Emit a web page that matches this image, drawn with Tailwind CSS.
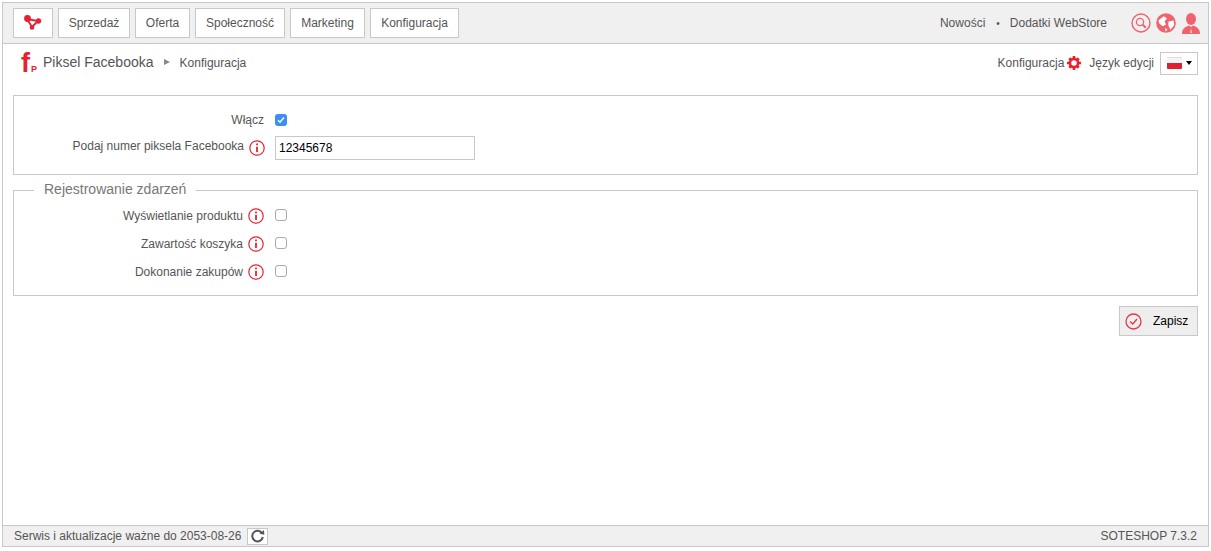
<!DOCTYPE html>
<html lang="pl">
<head>
  <meta charset="UTF-8">
  <title>Piksel Facebooka</title>
  <script src="https://cdn.jsdelivr.net/npm/@tailwindcss/browser@4"></script>
</head>
<body class="bg-white font-['Liberation_Sans',Arial,sans-serif] text-[12px] text-[#555]">
  <div class="ml-[2px] mr-[2px] mt-[2px] h-[545px] w-[1207px] border border-[#c8c8c8] flex flex-col">

    <!-- top menu -->
    <header class="h-[41px] shrink-0 bg-[#f0f0f0] border-b border-[#c8c8c8] flex items-start justify-between pl-[10px] pt-[5px]">
      <nav class="flex gap-[5px]">
        <a class="w-[40px] h-[30px] bg-white border border-[#c8c8c8] flex items-center justify-center">
          <svg width="20" height="16" viewBox="0 0 20 16"><path d="M4 4 L15 6 L9 12 Z" fill="none" stroke="#e8202f" stroke-width="1.8"/><circle cx="4.5" cy="3.5" r="3.4" fill="#e8202f"/><circle cx="15.5" cy="6" r="2.7" fill="#e8202f"/><circle cx="9" cy="12.5" r="2.3" fill="#e8202f"/></svg>
        </a>
        <a class="w-[72px] h-[30px] bg-white border border-[#c8c8c8] flex items-center justify-center">Sprzedaż</a>
        <a class="w-[55px] h-[30px] bg-white border border-[#c8c8c8] flex items-center justify-center">Oferta</a>
        <a class="w-[90px] h-[30px] bg-white border border-[#c8c8c8] flex items-center justify-center">Społeczność</a>
        <a class="w-[75px] h-[30px] bg-white border border-[#c8c8c8] flex items-center justify-center">Marketing</a>
        <a class="w-[89px] h-[30px] bg-white border border-[#c8c8c8] flex items-center justify-center">Konfiguracja</a>
      </nav>
      <div class="flex items-center h-[30px] pr-[8px]">
        <span>Nowości</span>
        <span class="ml-[11px] mr-[10px] text-[10px]">•</span>
        <span>Dodatki WebStore</span>
        <svg class="ml-[24px]" width="20" height="20" viewBox="0 0 20 20" fill="none" stroke="#f0626c"><circle cx="10" cy="10" r="9" stroke-width="1.4"/><circle cx="9" cy="9" r="3.6" stroke-width="1.3"/><path d="M11.8 11.8 L14.8 14.8" stroke-width="2"/></svg>
        <svg class="ml-[5px]" width="20" height="20" viewBox="0 0 21 21"><circle cx="10.5" cy="10.5" r="10.3" fill="#f0626c"/><path d="M2.5 8 L8 3.5 L11.5 5.5 L9 9 L10.5 12 L7 14 L3.5 11 Z M13 9 L18.5 8 L19 13 L15 17.5 L13 13 Z M9.5 15.5 L12 17.5 L10 19.5 Z" fill="#fff"/></svg>
        <svg class="ml-[6px]" width="18" height="21" viewBox="0 0 18 21"><ellipse cx="9" cy="6" rx="5" ry="6" fill="#f0626c"/><path d="M0 21 C0 15 4 13.5 7 12.5 L9 14 L11 12.5 C14 13.5 18 15 18 21 Z" fill="#f0626c"/><path d="M9 15 L8.3 20 L9.7 20 Z" fill="#fff"/></svg>
      </div>
    </header>

    <!-- breadcrumb -->
    <div class="h-[51px] shrink-0 flex items-start justify-between pl-[18px] pr-[10px]">
      <div class="flex items-start h-[36px] pt-[9px]">
        <span class="font-bold text-[27px] leading-[20px] w-[10px] text-[#e8202f]">f</span>
        <span class="mt-[12px] font-bold text-[9px] leading-[9px] text-[#e8202f]">P</span>
        <span class="ml-[6px] text-[14px] leading-[18px] text-[#555]">Piksel Facebooka</span>
        <span class="ml-[10px] mt-[6px] border-y-[3.5px] border-l-[6px] border-y-transparent border-l-[#888]"></span>
        <span class="ml-[10px] leading-[20px]">Konfiguracja</span>
      </div>
      <div class="flex items-center h-[38px]">
        <span>Konfiguracja</span>
        <svg class="ml-[3px]" width="14" height="14" viewBox="0 0 13 13"><circle cx="6.5" cy="6.5" r="3.8" fill="none" stroke="#e8202f" stroke-width="2.4"/><path d="M5.3 0h2.4v2.5H5.3z M5.3 10.5h2.4V13H5.3z M0 5.3h2.5v2.4H0z M10.5 5.3H13v2.4h-2.5z M1.2 3 3 1.2l1.6 1.6-1.8 1.8z M10 1.2 11.8 3l-1.6 1.8-1.8-1.8z M1.2 10 3 11.8l1.6-1.6-1.8-1.8z M10 11.8l1.8-1.8-1.6-1.6-1.8 1.8z" fill="#e8202f"/></svg>
        <span class="ml-[8px]">Język edycji</span>
        <div class="ml-[6px] w-[38px] h-[23px] border border-[#c8c8c8] flex items-center pl-[6px] gap-[4px]">
          <span class="w-[15px] h-[12px] flex flex-col rounded-[1px] overflow-hidden border-t border-[#ddd]"><span class="h-[5px] bg-[#f4f4f4]"></span><span class="h-[6px] bg-[#e01f30]"></span></span>
          <span class="border-x-[3.5px] border-t-[4px] border-x-transparent border-t-black"></span>
        </div>
      </div>
    </div>

    <!-- form -->
    <main class="flex-1 px-[10px]">
      <section class="h-[80px] border border-[#c8c8c8] pt-[12px]">
        <div class="flex h-[24px] items-center">
          <label class="w-[250px] text-right pb-[1px]">Włącz</label>
          <span class="ml-[11px] w-[12px] h-[12px] rounded-[3px] bg-[#3b8ff0] flex items-center justify-center">
            <svg width="8" height="8" viewBox="0 0 8 8" fill="none" stroke="#fff" stroke-width="1.4"><path d="M1 4.3 L3 6.3 L7 1.5"/></svg>
          </span>
        </div>
        <div class="flex h-[24px] mt-[4px] items-center">
          <label class="w-[230px] text-right pb-[5px]">Podaj numer piksela Facebooka</label>
          <svg class="ml-[5px]" width="16" height="16" viewBox="0 0 16 16" fill="none" stroke="#e8202f"><circle cx="8" cy="8" r="7.2" stroke-width="1.2"/><path d="M8 6.8V12" stroke-width="1.8"/><path d="M8 3.5V5.2" stroke-width="1.8"/></svg>
          <input class="ml-[10px] w-[200px] h-[24px] border border-[#c8c8c8] px-[3px] text-[12px] text-black outline-none" value="12345678">
        </div>
      </section>

      <fieldset class="mt-[7px] h-[114px] border border-[#c8c8c8] pl-[20px]">
        <legend class="px-[10px] text-[14px] leading-[16px] text-[#777]"><span class="block -translate-y-[1px]">Rejestrowanie zdarzeń</span></legend>
        <div class="-ml-[20px] mt-[5px] flex flex-col gap-[4px]">
          <div class="flex h-[24px] items-center">
            <label class="w-[229px] text-right pt-[2px]">Wyświetlanie produktu</label>
            <svg class="ml-[5px] mt-[2px]" width="16" height="16" viewBox="0 0 16 16" fill="none" stroke="#e8202f"><circle cx="8" cy="8" r="7.2" stroke-width="1.2"/><path d="M8 6.8V12" stroke-width="1.8"/><path d="M8 3.5V5.2" stroke-width="1.8"/></svg>
            <span class="ml-[11px] w-[12px] h-[12px] rounded-[3px] border border-[#aaa] bg-white"></span>
          </div>
          <div class="flex h-[24px] items-center">
            <label class="w-[229px] text-right pt-[2px]">Zawartość koszyka</label>
            <svg class="ml-[5px] mt-[2px]" width="16" height="16" viewBox="0 0 16 16" fill="none" stroke="#e8202f"><circle cx="8" cy="8" r="7.2" stroke-width="1.2"/><path d="M8 6.8V12" stroke-width="1.8"/><path d="M8 3.5V5.2" stroke-width="1.8"/></svg>
            <span class="ml-[11px] w-[12px] h-[12px] rounded-[3px] border border-[#aaa] bg-white"></span>
          </div>
          <div class="flex h-[24px] items-center">
            <label class="w-[229px] text-right pt-[2px]">Dokonanie zakupów</label>
            <svg class="ml-[5px] mt-[2px]" width="16" height="16" viewBox="0 0 16 16" fill="none" stroke="#e8202f"><circle cx="8" cy="8" r="7.2" stroke-width="1.2"/><path d="M8 6.8V12" stroke-width="1.8"/><path d="M8 3.5V5.2" stroke-width="1.8"/></svg>
            <span class="ml-[11px] w-[12px] h-[12px] rounded-[3px] border border-[#aaa] bg-white"></span>
          </div>
        </div>
      </fieldset>

      <div class="flex justify-end mt-[10px]">
        <button class="w-[79px] h-[30px] bg-[#eeeeee] border border-[#c8c8c8] flex items-center pl-[5px] text-black">
          <svg width="17" height="17" viewBox="0 0 17 17" fill="none" stroke="#e8384a"><circle cx="8.5" cy="8.5" r="7.5" stroke-width="1.3"/><path d="M5 8.5 L7.8 11 L12 6" stroke-width="1.4"/></svg>
          <span class="ml-[11px]">Zapisz</span>
        </button>
      </div>
    </main>

    <!-- footer -->
    <footer class="h-[21px] shrink-0 bg-[#f0f0f0] border-t border-[#c8c8c8] flex items-center justify-between pl-[11px] pr-[11px]">
      <div class="flex items-center">
        <span>Serwis i aktualizacje ważne do 2053-08-26</span>
        <span class="ml-[6px] w-[21px] h-[17px] bg-white border border-[#c8c8c8] flex items-center justify-center">
          <svg width="15" height="14" viewBox="0 0 15 14" fill="none"><path d="M12.2 4.5 A5.3 5.3 0 1 0 12.8 8" stroke="#555" stroke-width="2"/><path d="M9.5 4.8 L14.3 5.8 L14 1 Z" fill="#555"/></svg>
        </span>
      </div>
      <span>SOTESHOP 7.3.2</span>
    </footer>
  </div>
</body>
</html>
